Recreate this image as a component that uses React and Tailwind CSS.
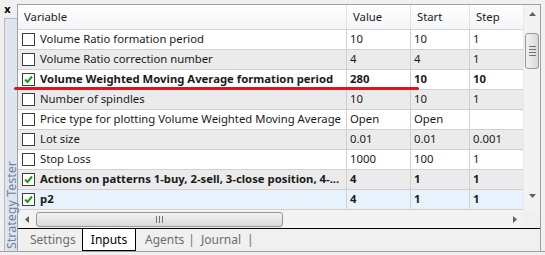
import React from "react";

const rows = [
  { c: false, b: false, name: "Volume Ratio formation period", v: "10", s: "10", st: "1", bg: "bg-white" },
  { c: false, b: false, name: "Volume Ratio correction number", v: "4", s: "4", st: "1", bg: "bg-[#ebebeb]" },
  { c: true, b: true, name: "Volume Weighted Moving Average formation period", v: "280", s: "10", st: "10", bg: "bg-white" },
  { c: false, b: false, name: "Number of spindles", v: "10", s: "10", st: "1", bg: "bg-[#ebebeb]" },
  { c: false, b: false, name: "Price type for plotting Volume Weighted Moving Average", v: "Open", s: "Open", st: "", bg: "bg-white" },
  { c: false, b: false, name: "Lot size", v: "0.01", s: "0.01", st: "0.001", bg: "bg-[#ebebeb]" },
  { c: false, b: false, name: "Stop Loss", v: "1000", s: "100", st: "1", bg: "bg-white" },
  { c: true, b: true, name: "Actions on patterns 1-buy, 2-sell, 3-close position, 4-...", v: "4", s: "1", st: "1", bg: "bg-[#ebebeb]" },
  { c: true, b: true, name: "p2", v: "4", s: "1", st: "1", bg: "bg-[#e8f2fd]" },
];

function Check({ checked }) {
  return (
    <span className="w-[13px] h-[13px] border border-[#3c3c3c] bg-white flex items-center justify-center shrink-0">
      {checked && (
        <svg width="11" height="11" viewBox="0 0 11 11">
          <path d="M2 5.5 L4.5 8 L9 2.5" stroke="#1d9a1d" strokeWidth="2" fill="none" />
        </svg>
      )}
    </span>
  );
}

export default function App() {
  return (
    <div
      className="w-[545px] h-[255px] bg-[#f0f0f0] flex flex-col overflow-hidden relative text-[11.3px] text-[#1a1a1a]"
      style={{ fontFamily: '"Noto Sans", "DejaVu Sans", sans-serif' }}
    >
      <div className="flex h-[251px]">
        {/* left strip */}
        <div className="w-[17px] flex flex-col">
          <div className="h-[18px] flex justify-center pt-[3px] pr-[2px] text-[11px] font-bold leading-[12px] text-black">x</div>
          <div className="flex-1 ml-[4px] border-l border-t border-[#b4bcc8] bg-[#dfe5ee] flex items-end justify-center pb-[2px]">
            <span className="[writing-mode:vertical-rl] rotate-180 text-[12.5px] leading-[11px] text-[#6f819c]">Strategy Tester</span>
          </div>
        </div>
        {/* main */}
        <div className="flex-1 flex flex-col pt-[4px] pr-[4px]">
          <div className="flex-1 flex flex-col border-l border-t border-r border-[#a0a0a0]">
            <div className="flex">
              <div className="w-[505px] flex flex-col">
                {/* header */}
                <div className="h-[25px] flex border-b border-[#d5d5d5] bg-gradient-to-b from-white to-[#f4f5f7]">
                  <div className="w-[329px] border-r border-[#e3e3e3] flex items-center pl-[6px]">Variable</div>
                  <div className="w-[64px] border-r border-[#e3e3e3] flex items-center pl-[6px]">Value</div>
                  <div className="w-[59px] border-r border-[#e3e3e3] flex items-center pl-[6px]">Start</div>
                  <div className="w-[53px] flex items-center pl-[6px]">Step</div>
                </div>
                {rows.map((r, i) => (
                  <div key={i} className={`h-[20px] flex border-b border-[#d0d0d0] ${r.bg} ${r.b ? "font-bold" : ""}`}>
                    <div className="w-[329px] border-r border-[#d0d0d0] flex items-center pl-[4px] gap-[5px] whitespace-nowrap overflow-hidden">
                      <Check checked={r.c} />
                      <span>{r.name}</span>
                    </div>
                    <div className="w-[64px] border-r border-[#d0d0d0] flex items-center pl-[3px]">{r.v}</div>
                    <div className="w-[59px] border-r border-[#d0d0d0] flex items-center pl-[3px]">{r.s}</div>
                    <div className="w-[53px] flex items-center pl-[3px]">{r.st}</div>
                  </div>
                ))}
              </div>
              {/* vertical scrollbar */}
              <div className="w-[17px] bg-[#f3f3f3] border-l border-[#e8e8e8] flex flex-col items-center">
                <div className="h-[17px] w-full flex items-center justify-center">
                  <svg width="7" height="4" viewBox="0 0 7 4"><path d="M0 4 L3.5 0 L7 4 Z" fill="#606060" /></svg>
                </div>
                <div className="h-[11px]" />
                <div className="w-[14px] h-[36px] rounded-[3px] border border-[#979797] bg-gradient-to-r from-[#f2f2f2] to-[#d9d9d9] flex flex-col items-center justify-center gap-[2px]">
                  <div className="w-[7px] h-px bg-[#707070]" />
                  <div className="w-[7px] h-px bg-[#707070]" />
                  <div className="w-[7px] h-px bg-[#707070]" />
                  <div className="w-[7px] h-px bg-[#707070]" />
                </div>
                <div className="flex-1" />
                <div className="h-[22px] w-full flex items-start justify-center pt-[6px]">
                  <svg width="7" height="4" viewBox="0 0 7 4"><path d="M0 0 L3.5 4 L7 0 Z" fill="#606060" /></svg>
                </div>
              </div>
            </div>
            {/* horizontal scrollbar */}
            <div className="h-[18px] flex">
              <div className="w-[505px] bg-[#f3f3f3] flex items-center">
                <div className="w-[17px] h-full flex items-center justify-center">
                  <svg width="4" height="7" viewBox="0 0 4 7"><path d="M4 0 L0 3.5 L4 7 Z" fill="#606060" /></svg>
                </div>
                <div className="ml-[1px] w-[247px] h-[15px] rounded-[3px] border border-[#979797] bg-gradient-to-b from-[#f2f2f2] to-[#d9d9d9] flex items-center justify-center gap-[2px]">
                  <div className="w-px h-[7px] bg-[#707070]" />
                  <div className="w-px h-[7px] bg-[#707070]" />
                  <div className="w-px h-[7px] bg-[#707070]" />
                </div>
                <div className="flex-1" />
                <div className="w-[17px] h-full flex items-center justify-center">
                  <svg width="4" height="7" viewBox="0 0 4 7"><path d="M0 0 L4 3.5 L0 7 Z" fill="#606060" /></svg>
                </div>
              </div>
              <div className="w-[17px] bg-[#f0f0f0]" />
            </div>
            {/* tabs */}
            <div className="flex-1 border-t border-black flex items-stretch text-[#6d6d6d] text-[12px]">
              <div className="pl-[12px] w-[64px] flex items-center">Settings</div>
              <div className="w-[54px] border-l border-r border-b border-black bg-white flex items-center justify-center text-black">Inputs</div>
              <div className="pl-[9px] flex items-center">Agents</div>
              <div className="pl-[4px] flex items-center">|</div>
              <div className="pl-[6px] flex items-center">Journal</div>
              <div className="pl-[6px] flex items-center">|</div>
            </div>
          </div>
        </div>
      </div>
      <div className="h-[4px] border-t border-[#a0a0a0]" />
      {/* red underline */}
      <div className="absolute left-[14px] top-[87px] w-[405px] h-[3px] bg-[#e3131b] rounded-full" />
    </div>
  );
}
